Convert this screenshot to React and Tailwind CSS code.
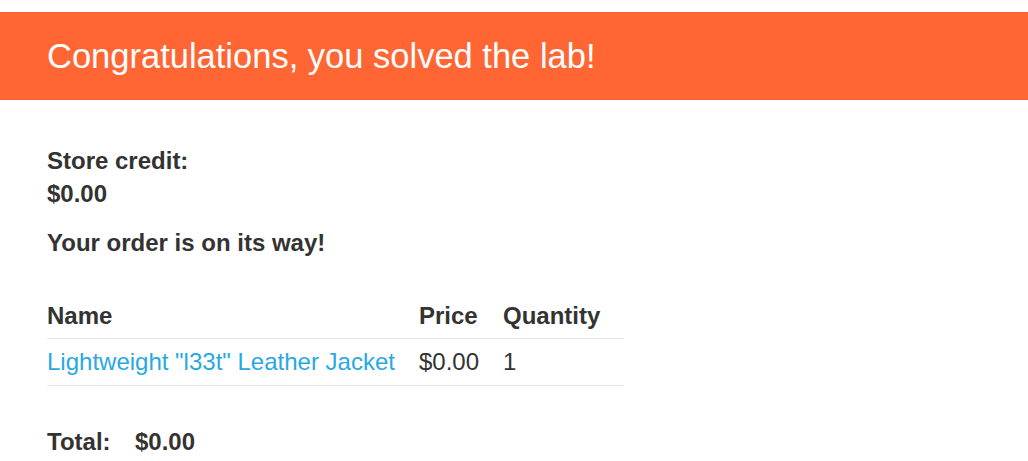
export default function App() {
  return (
    <div className="w-[1028px] h-[461px] overflow-hidden bg-white pt-[12px] text-[#333332]" style={{ fontFamily: '"Liberation Sans", Arial, sans-serif' }}>
      <div className="bg-[#ff6633] h-[88px] flex items-center pl-[47px]">
        <h4 className="text-white text-[34.5px] leading-none">Congratulations, you solved the lab!</h4>
      </div>
      <div className="pl-[47px] pt-[44px] text-[24px]">
        <div className="font-bold leading-[33px]">Store credit:</div>
        <div className="font-bold leading-[33px]">$0.00</div>
        <div className="font-bold leading-[33px] mt-[16px]">Your order is on its way!</div>
        <table className="mt-[32px] w-[577px] border-collapse table-fixed">
          <thead>
            <tr className="border-b border-[#e6e6e6]">
              <th className="w-[372px] text-left font-bold h-[47px] p-0 pt-[3px] align-middle">Name</th>
              <th className="w-[84px] text-left font-bold p-0 pt-[3px] align-middle">Price</th>
              <th className="text-left font-bold p-0 pt-[3px] align-middle">Quantity</th>
            </tr>
          </thead>
          <tbody>
            <tr className="border-b border-[#e6e6e6]">
              <td className="h-[47px] p-0 align-middle text-[#29a8e2] whitespace-nowrap">Lightweight "l33t" Leather Jacket</td>
              <td className="p-0 align-middle">$0.00</td>
              <td className="p-0 align-middle">1</td>
            </tr>
          </tbody>
        </table>
        <div className="mt-[39px] flex font-bold leading-[33px]">
          <span className="w-[88px]">Total:</span>
          <span>$0.00</span>
        </div>
      </div>
    </div>
  );
}
